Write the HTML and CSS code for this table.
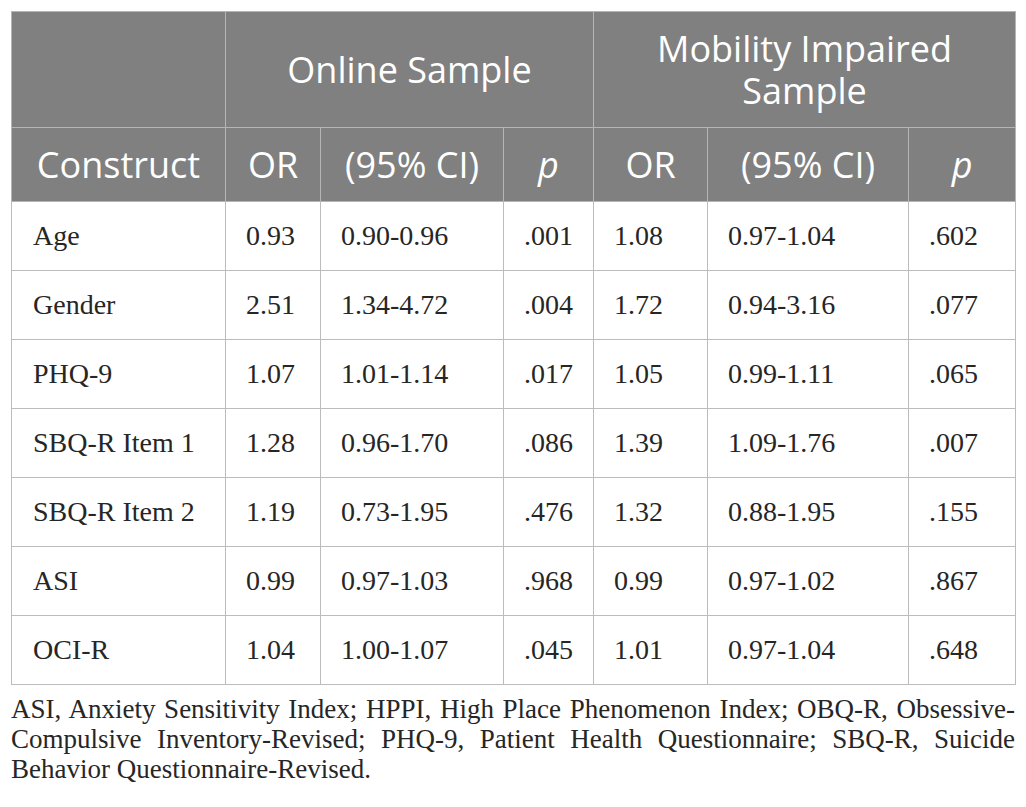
FILE: index.html
```html
<!DOCTYPE html>
<html>
<head>
<meta charset="utf-8">
<link rel="stylesheet" href="styles.css">
</head>
<body>
<div class="wrap">
<table class="data">
  <colgroup>
    <col class="c1"><col class="c2"><col class="c3"><col class="c4"><col class="c5"><col class="c6"><col class="c7">
  </colgroup>
  <thead>
    <tr class="h1">
      <th></th>
      <th colspan="3">Online Sample</th>
      <th colspan="3">Mobility Impaired<br>Sample</th>
    </tr>
    <tr class="h2">
      <th>Construct</th>
      <th>OR</th>
      <th>(95% CI)</th>
      <th><i>p</i></th>
      <th>OR</th>
      <th>(95% CI)</th>
      <th><i>p</i></th>
    </tr>
  </thead>
  <tbody>
    <tr><td>Age</td><td>0.93</td><td>0.90-0.96</td><td>.001</td><td>1.08</td><td>0.97-1.04</td><td>.602</td></tr>
    <tr><td>Gender</td><td>2.51</td><td>1.34-4.72</td><td>.004</td><td>1.72</td><td>0.94-3.16</td><td>.077</td></tr>
    <tr><td>PHQ-9</td><td>1.07</td><td>1.01-1.14</td><td>.017</td><td>1.05</td><td>0.99-1.11</td><td>.065</td></tr>
    <tr><td>SBQ-R Item 1</td><td>1.28</td><td>0.96-1.70</td><td>.086</td><td>1.39</td><td>1.09-1.76</td><td>.007</td></tr>
    <tr><td>SBQ-R Item 2</td><td>1.19</td><td>0.73-1.95</td><td>.476</td><td>1.32</td><td>0.88-1.95</td><td>.155</td></tr>
    <tr><td>ASI</td><td>0.99</td><td>0.97-1.03</td><td>.968</td><td>0.99</td><td>0.97-1.02</td><td>.867</td></tr>
    <tr><td>OCI-R</td><td>1.04</td><td>1.00-1.07</td><td>.045</td><td>1.01</td><td>0.97-1.04</td><td>.648</td></tr>
  </tbody>
</table>
<p class="note">ASI, Anxiety Sensitivity Index; HPPI, High Place Phenomenon Index; OBQ-R, Obsessive-Compulsive Inventory-Revised; PHQ-9, Patient Health Questionnaire; SBQ-R, Suicide Behavior Questionnaire-Revised.</p>
</div>
</body>
</html>
```

FILE: styles.css
```css
html, body {
  margin: 0;
  padding: 0;
  background: #ffffff;
}
.wrap {
  padding: 11px 11px 0 11px;
  width: 1004px;
}
.data {
  border-collapse: collapse;
  table-layout: fixed;
  width: 1004px;
  font-family: "Liberation Serif", "Times New Roman", serif;
  color: #262626;
}
.c1 { width: 214px; }
.c2 { width: 95px; }
.c3 { width: 183px; }
.c4 { width: 90px; }
.c5 { width: 114px; }
.c6 { width: 201px; }
.c7 { width: 107px; }
.data th {
  background: #808080;
  color: #ffffff;
  font-family: "Open Sans", "Liberation Sans", sans-serif;
  font-weight: 400;
  font-size: 36px;
  line-height: 42px;
  text-align: center;
  border: 1px solid #b5b5b5;
  padding: 0;
}
.data th i {
  font-style: italic;
}
.h1 th { height: 115px; }
.h2 th { height: 73px; }
.data td {
  height: 68px;
  font-size: 28px;
  border: 1px solid #bcbcbc;
  padding: 0 0 0 20px;
  text-align: left;
  vertical-align: middle;
}
.data td:first-child {
  padding-left: 21px;
}
.note {
  margin: 9px 0 0 0;
  font-family: "Liberation Serif", "Times New Roman", serif;
  font-size: 27px;
  line-height: 30px;
  color: #262626;
  text-align: justify;
}
```
